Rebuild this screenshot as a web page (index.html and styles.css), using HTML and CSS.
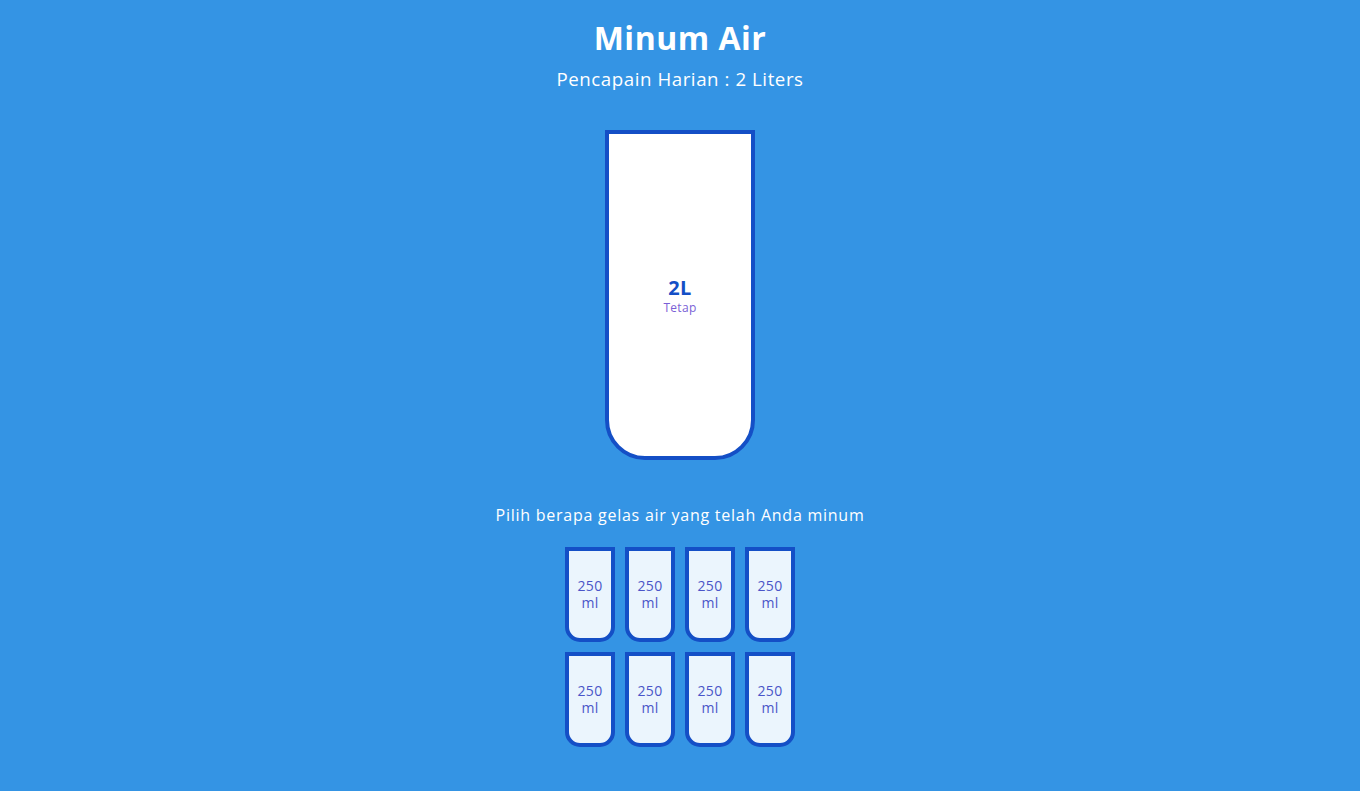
FILE: index.html
```html
<!DOCTYPE html>
<html lang="id">
<head>
<meta charset="utf-8">
<title>Minum Air</title>
<link rel="stylesheet" href="styles.css">
</head>
<body>
  <h1>Minum Air</h1>
  <h3>Pencapain Harian : 2 Liters</h3>
  <div class="cup">
    <div class="remained">
      <span>2L</span>
      <small>Tetap</small>
    </div>
  </div>
  <p class="text">Pilih berapa gelas air yang telah Anda minum</p>
  <div class="cups">
    <div class="cup cup-small">250 ml</div>
    <div class="cup cup-small">250 ml</div>
    <div class="cup cup-small">250 ml</div>
    <div class="cup cup-small">250 ml</div>
    <div class="cup cup-small">250 ml</div>
    <div class="cup cup-small">250 ml</div>
    <div class="cup cup-small">250 ml</div>
    <div class="cup cup-small">250 ml</div>
  </div>
</body>
</html>
```
FILE: styles.css
```css
* { box-sizing: border-box; }
body {
  background-color: #3494e4;
  color: #fff;
  font-family: "Open Sans", "DejaVu Sans", sans-serif;
  display: flex;
  flex-direction: column;
  align-items: center;
  margin: 8px 0 50px;
}
h1 { margin: 10px 0 0; font-size: 32px; line-height: 39px; font-weight: 700; letter-spacing: 0.5px; }
h3 { font-weight: 400; margin: 10px 0; font-size: 18.72px; line-height: 23px; letter-spacing: 0.55px; }
.cup {
  background-color: #fff;
  border: 4px solid #144fc6;
  color: #144fc6;
  border-radius: 0 0 40px 40px;
  height: 330px;
  width: 150px;
  margin: 30px 0;
  display: flex;
  flex-direction: column;
  overflow: hidden;
}
.cup.cup-small {
  height: 95px;
  width: 50px;
  border-radius: 0 0 15px 15px;
  background-color: rgba(255,255,255,0.9);
  cursor: pointer;
  font-size: 14px;
  line-height: 17px;
  letter-spacing: 0.3px;
  align-items: center;
  justify-content: center;
  text-align: center;
  margin: 5px;
  color: #4a55c8;
}
.cups {
  display: flex;
  flex-wrap: wrap;
  align-items: center;
  justify-content: center;
  width: 280px;
}
.remained {
  display: flex;
  flex-direction: column;
  align-items: center;
  justify-content: center;
  text-align: center;
  flex: 1;
}
.remained span { font-size: 20px; line-height: 24px; font-weight: 700; letter-spacing: 0.5px; }
.remained small { font-size: 12px; line-height: 15px; color: #7a5fd6; letter-spacing: 0.3px; }
.text { text-align: center; margin: 16px 0; font-size: 16px; line-height: 19.5px; letter-spacing: 0.75px; }
```
